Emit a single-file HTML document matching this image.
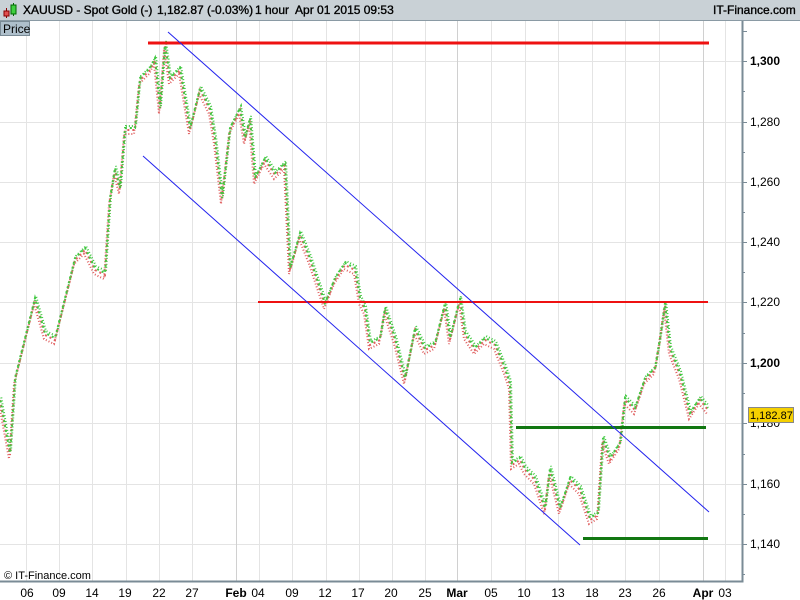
<!DOCTYPE html><html><head><meta charset="utf-8"><style>
body{margin:0;width:800px;height:600px;overflow:hidden;background:#fff;font-family:"Liberation Sans",sans-serif}
.hdr{position:absolute;left:0;top:0;width:800px;height:20px;background:#c9d1d6;border-bottom:1px solid #8a9aa4;font-size:12px;color:#000}
.hdr span{position:absolute;top:3px;white-space:nowrap;-webkit-text-stroke:0.35px #000}
.price{position:absolute;left:0;top:21px;background:#aebfcb;border:1px solid #7a8b96;font-size:12px;line-height:14px;padding-left:2px;box-sizing:border-box;width:30px;height:15px}
</style></head><body>
<div class="hdr">
<svg style="position:absolute;left:3px;top:2px" width="14" height="17"><line x1="3.5" y1="6" x2="3.5" y2="16" stroke="#800"/><rect x="1" y="9" width="5" height="5" fill="#e05050" stroke="#800"/><line x1="10.5" y1="1" x2="10.5" y2="14" stroke="#060"/><rect x="8" y="3" width="5" height="9" fill="#40d040" stroke="#060"/></svg>
<span style="left:23px">XAUUSD - Spot Gold (-)</span><span style="left:157px">1,182.87 (-0.03%)</span><span style="left:255px">1 hour&nbsp; Apr 01 2015 09:53</span><span style="left:713px">IT-Finance.com</span></div>
<div class="price">Price</div>
<svg style="position:absolute;left:0;top:0" width="800" height="600">
<defs><polyline id="p" fill="none" points="0,400 10,455 15,380 25,340 35,300 45,335 55,340 65,300 75,260 85,250 95,270 105,275 110,200 115,170 120,190 125,130 135,130 140,80 150,70 155,60 160,110 165,45 170,80 180,70 190,130 200,90 210,110 215,140 222,200 230,130 240,110 245,140 250,120 255,180 265,160 275,175 285,165 290,270 300,235 310,260 320,290 325,305 335,280 345,265 355,270 360,300 365,310 370,345 380,340 385,310 395,340 405,380 415,330 425,350 435,345 445,305 450,340 460,300 465,335 475,350 485,340 495,345 505,370 510,385 512,465 520,460 525,470 535,480 545,510 550,470 560,510 570,480 580,490 590,520 598,515 603,440 610,460 620,445 625,400 635,410 645,380 655,370 660,340 665,305 670,350 680,375 690,415 700,400 708,410"/></defs>
<g stroke="#e4e4e4" stroke-width="1">
<line x1="0" y1="61.5" x2="742" y2="61.5"/><line x1="0" y1="122.5" x2="742" y2="122.5"/><line x1="0" y1="182.5" x2="742" y2="182.5"/><line x1="0" y1="242.5" x2="742" y2="242.5"/><line x1="0" y1="302.5" x2="742" y2="302.5"/><line x1="0" y1="363.5" x2="742" y2="363.5"/><line x1="0" y1="423.5" x2="742" y2="423.5"/><line x1="0" y1="484.5" x2="742" y2="484.5"/><line x1="0" y1="544.5" x2="742" y2="544.5"/>
<path d="M26.5 36V581M59.5 21V581M92.5 21V581M126.5 21V581M159.5 21V581M192.5 21V581M259.5 21V581M292.5 21V581M326.5 21V581M359.5 21V581M392.5 21V581M425.5 21V581M491.5 21V581M525.5 21V581M558.5 21V581M592.5 21V581M625.5 21V581M659.5 21V581M725.5 21V581"/>
</g>
<path d="M236.5 21V581M457.5 21V581M703.5 21V581" stroke="#d0d0d0"/>
<use href="#p" stroke="#e06060" stroke-width="2" stroke-dasharray="1 2" transform="translate(-1,4)"/>
<use href="#p" stroke="#40c840" stroke-width="2" stroke-dasharray="1 2" stroke-dashoffset="1.5" transform="translate(1,-4)"/>
<use href="#p" stroke="#e06060" stroke-width="2" stroke-dasharray="2 3"/>
<use href="#p" stroke="#40c840" stroke-width="2" stroke-dasharray="2 3" stroke-dashoffset="2.5" transform="translate(0,-2)"/>
<line x1="148" y1="43" x2="709" y2="43" stroke="#ee1111" stroke-width="3"/>
<line x1="258" y1="302" x2="708" y2="302" stroke="#ee1111" stroke-width="2"/>
<line x1="516" y1="427.5" x2="706" y2="427.5" stroke="#117711" stroke-width="3"/>
<line x1="583" y1="538.5" x2="708" y2="538.5" stroke="#117711" stroke-width="3"/>
<line x1="168" y1="32" x2="709" y2="512" stroke="#2222ee" stroke-width="1"/>
<line x1="143" y1="156" x2="580" y2="545" stroke="#2222ee" stroke-width="1"/>
<path d="M742.5 21V581.5H0" stroke="#7a8b96" fill="none" stroke-width="2"/>
<path d="M742 61.5h5M742 122.5h5M742 182.5h5M742 242.5h5M742 302.5h5M742 363.5h5M742 423.5h5M742 484.5h5M742 544.5h5M742 31.5h5M742 91.5h3M742 152.5h3M742 212.5h3M742 272.5h3M742 333.5h3M742 393.5h3M742 454.5h3M742 514.5h3M742 574.5h3" stroke="#7a8b96"/>
<g font-size="12" fill="#000" font-family="Liberation Sans,sans-serif">
<text x="750" y="65" font-weight="bold">1,300</text><text x="750" y="126">1,280</text><text x="750" y="186">1,260</text><text x="750" y="246">1,240</text><text x="750" y="306">1,220</text><text x="750" y="367" font-weight="bold">1,200</text><text x="750" y="427">1,180</text><text x="750" y="488">1,160</text><text x="750" y="548">1,140</text>
<text x="4" y="579" font-size="11">© IT-Finance.com</text>
<g text-anchor="middle"><text x="27" y="597">06</text><text x="59" y="597">09</text><text x="92" y="597">14</text><text x="125" y="597">19</text><text x="159" y="597">22</text><text x="192" y="597">27</text><text x="236" y="597" font-weight="bold">Feb</text><text x="258" y="597">04</text><text x="292" y="597">09</text><text x="325" y="597">12</text><text x="358" y="597">17</text><text x="391" y="597">20</text><text x="425" y="597">25</text><text x="457" y="597" font-weight="bold">Mar</text><text x="491" y="597">05</text><text x="524" y="597">10</text><text x="558" y="597">13</text><text x="592" y="597">18</text><text x="625" y="597">23</text><text x="659" y="597">26</text><text x="703" y="597" font-weight="bold">Apr</text><text x="725" y="597">03</text></g>
</g>
<rect x="748.5" y="407.5" width="45" height="15" fill="#f5d000" stroke="#888"/>
<text x="750" y="419" font-size="11" font-family="Liberation Sans,sans-serif">1,182.87</text>
</svg>
</body></html>
